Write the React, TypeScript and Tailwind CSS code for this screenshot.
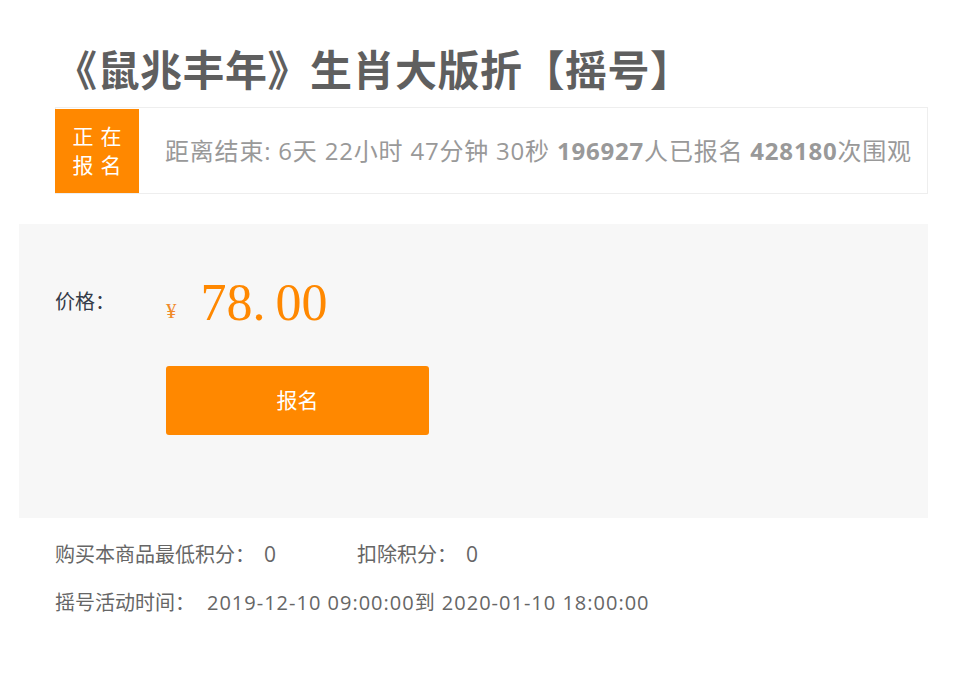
const cjk = { fontFamily: '"Open Sans", "Noto Sans CJK SC", sans-serif' };
const serif = { fontFamily: '"Liberation Serif", "Noto Sans CJK SC", serif' };

export default function App() {
  return (
    <div className="w-[957px] h-[679px] bg-white" style={cjk}>
      {/* Title */}
      <div className="pl-[55px] pt-[40px]">
        <h1 className="text-[42px] leading-[60px] font-bold text-[#5f5f5f] tracking-[0.5px]">
          《鼠兆丰年》生肖大版折【摇号】
        </h1>

        {/* Status bar */}
        <div className="mt-[7px] w-[873px] h-[87px] border border-[#eeeeee] flex items-center">
          <div className="w-[84px] h-[84px] -ml-px bg-[#ff8800] text-white text-[21px] leading-[29px] tracking-[7px] flex flex-col items-center justify-center pl-[7px]">
            <span>正在</span>
            <span>报名</span>
          </div>
          <div className="ml-[26px] text-[24px] tracking-[0.8px] text-[#999999] whitespace-nowrap">
            距离结束: 6天 22小时 47分钟 30秒 <b className="font-bold">196927</b>人已报名{' '}
            <b className="font-bold">428180</b>次围观
          </div>
        </div>
      </div>

      {/* Price panel */}
      <div className="ml-[19px] mt-[30px] w-[909px] h-[294px] bg-[#f7f7f7] pl-[36px] pt-[50px]">
        <div className="flex items-center h-[58px]">
          <span className="w-[111px] text-[20px] text-[#353b48] -mt-[2px]">价格：</span>
          <span className="text-[21px] text-[#f08a2a] mt-[18px]" style={serif}>¥</span>
          <span className="ml-[24px] text-[52px] text-[#ff8800] leading-none" style={serif}>
            78.<span className="ml-[10px]">00</span>
          </span>
        </div>
        <button className="mt-[34px] ml-[111px] w-[263px] h-[69px] bg-[#ff8800] rounded-[3px] text-white text-[21px]">
          报名
        </button>
      </div>

      {/* Meta */}
      <div className="pl-[55px] pt-[22px] text-[20px] text-[#666666]">
        <div className="flex h-[30px] items-center">
          <span className="w-[302px]">
            购买本商品最低积分：<span className="ml-[9px] text-[21px]">0</span>
          </span>
          <span>
            扣除积分：<span className="ml-[9px] text-[21px]">0</span>
          </span>
        </div>
        <div className="mt-[18px] h-[30px] flex items-center whitespace-nowrap">
          摇号活动时间：
          <span className="ml-[12px] tracking-[1px]">2019-12-10 09:00:00到 2020-01-10 18:00:00</span>
        </div>
      </div>
    </div>
  );
}
